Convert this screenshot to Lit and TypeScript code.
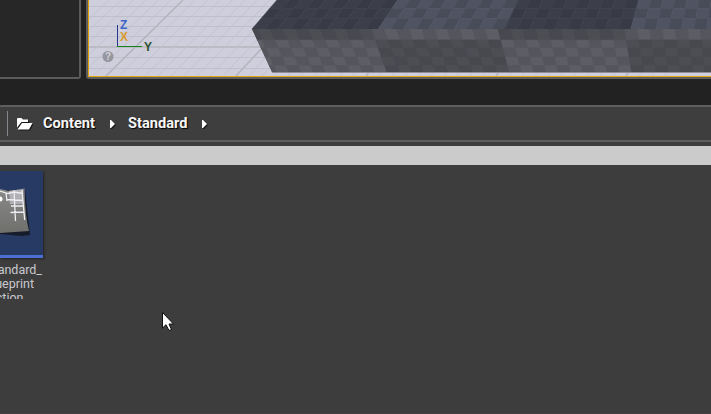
import { LitElement, html, css, svg } from "lit";
import { customElement } from "lit/decorators.js";

const poly = (p: number[][], fill: string) =>
  svg`<polygon points=${p.map((q) => q.map((n) => n.toFixed(2)).join(",")).join(" ")} fill=${fill} stroke=${fill} stroke-width="0.6"></polygon>`;

@customElement("level-viewport")
class LevelViewport extends LitElement {
  static styles = css`
    :host { display: block; flex: 1; box-sizing: border-box; border-left: 2px solid #5d5d5d; border-bottom: 2px solid #5d5d5d; border-bottom-left-radius: 3px; background: #5d5d5d; }
    .frame { height: 100%; box-sizing: border-box; border-left: 1px solid #e0a000; border-bottom: 1px solid #e8a50c; overflow: hidden; }
    svg { display: block; width: 622px; height: 76px; font-family: "Liberation Sans", sans-serif; }
    .axis { font-size: 12px; font-weight: 700; }
    .help { font-size: 10px; font-weight: 700; }
  `;

  floor() {
    const rows = [6.5, 16.5, 26.5, 36.5, 57.5, 68.5];
    const cols = Array.from({ length: 50 }, (_, i) => i - 6);
    return svg`
      ${rows.map((y) => svg`<path d="M89 ${y}H711" stroke="#c0c0cc"></path>`)}
      <path d="M89 47H711" stroke="#b7b6be" stroke-width="1.6"></path>
      ${cols.map((i) => {
        const major = i % 10 === 0;
        const x = 106 + i * 13;
        return svg`<path d="M${x} 76L${x + 77 - i * 0.65} 0" stroke=${major ? "#b4b4be" : "#c1c1cc"} stroke-width=${major ? 1.5 : 0.8}></path>`;
      })}`;
  }

  topFace() {
    const x = (i: number, y: number) => 252 + 12.63 * i + (25 - 0.57 * i) * (1 - y / 29);
    const ys = [-1, 8.5, 18.5, 29];
    const out = [];
    for (let i = 0; i < 38; i++)
      for (let r = 0; r < 3; r++) {
        const pale = Math.floor(i / 10) % 2 === 1;
        const alt = (i + r) % 2 === 0;
        out.push(poly([[x(i, ys[r]), ys[r]], [x(i + 1, ys[r]), ys[r]], [x(i + 1, ys[r + 1]), ys[r + 1]], [x(i, ys[r + 1]), ys[r + 1]]],
          pale ? (alt ? "#505462" : "#484c59") : (alt ? "#3c3f4a" : "#383a46")));
      }
    return out;
  }

  frontFace() {
    const x = (i: number, y: number) => 245 + 12.65 * i + (19.5 - 0.1 * i * 4.1) * ((y - 29) / 43);
    const ys = [29, 40, 48, 57, 65.5, 72];
    const out = [];
    for (let i = 0; i < 38; i++)
      for (let r = 0; r < 5; r++) {
        const even = Math.floor(i / 10) % 2 === 0;
        const pale = r === 0 ? !even : even;
        const alt = (i + r) % 2 === 0;
        out.push(poly([[x(i, ys[r]), ys[r]], [x(i + 1, ys[r]), ys[r]], [x(i + 1, ys[r + 1]), ys[r + 1]], [x(i, ys[r + 1]), ys[r + 1]]],
          pale ? (alt ? "#55555d" : "#5d5d65") : (alt ? "#48484f" : "#4d4d54")));
      }
    return out;
  }

  render() {
    return html`<div class="frame"><svg viewBox="89 0 622 76">
      <defs><clipPath id="front"><polygon points="252,29 711,29 711,72 272,72"></polygon></clipPath></defs>
      <rect x="89" width="622" height="76" fill="#cecedd"></rect>
      ${this.floor()}
      ${this.topFace()}
      <polygon points="252,29 711,29 711,72 272,72" fill="#54545a"></polygon>
      <g clip-path="url(#front)">${this.frontFace()}</g>
      <path d="M272 72.5H711" stroke="#8e8e99"></path>
      <path d="M117.5 25V46" stroke="#27338c"></path>
      <path d="M117 46.5H142" stroke="#17831f"></path>
      <text class="axis" x="120" y="29" fill="#3b62c8">Z</text>
      <text class="axis" x="120" y="41" fill="#d99a2b">X</text>
      <text class="axis" x="144" y="51" fill="#2b5330">Y</text>
      <circle cx="108" cy="56.5" r="5.5" fill="#96969f"></circle>
      <text class="help" x="105" y="60.2" fill="#d0d0dc">?</text>
    </svg></div>`;
  }
}

@customElement("path-bar")
class PathBar extends LitElement {
  static styles = css`
    :host { display: flex; align-items: center; box-sizing: border-box; height: 37px; border-top: 2px solid #5e5e5e; border-bottom: 2px solid #5e5e5e; background: #3e3e3e; padding-left: 7px; font: 700 14.6px/18px Roboto, sans-serif; color: #f6f6f6; text-shadow: 1px 1px 1px #000; }
    .rule { width: 1px; height: 25px; background: #85858b; }
    .folder { width: 17px; height: 14px; margin: 0 10px 0 8px; filter: drop-shadow(1px 1px 0 #151515); }
    .arrow { width: 6px; height: 10px; filter: drop-shadow(1px 1px 0 #151515); }
    .first { width: 52px; margin: 0 15px 2px 0; }
    .second { width: 59px; margin: 0 15px 2px 12px; }
    .arrow, .folder { flex: none; }
  `;
  arrow() {
    return html`<svg class="arrow" viewBox="0 0 6 10"><path d="M0 1H1L5 5L1 9H0Z" fill="#fff"></path></svg>`;
  }
  render() {
    return html`<span class="rule"></span>
      <svg class="folder" viewBox="0 0 17 14"><path d="M1 10.5V2Q1 1 2 1H5.5L7 2.6H12V5H5.5ZM1.5 12.5L6 6H16.5L13 12.5Z" fill="#fff"></path></svg>
      <span class="first">Content</span>${this.arrow()}<span class="second">Standard</span>${this.arrow()}`;
  }
}

@customElement("asset-tile")
class AssetTile extends LitElement {
  static styles = css`
    :host { display: block; width: 44px; }
    .thumb { display: block; width: 43px; height: 87px; box-shadow: 1px 1px 2px #222; }
    .name { height: 36px; margin-top: 5px; overflow: hidden; color: #c9c9cf; font: 12.5px/14px Roboto, sans-serif; }
    .line { display: flex; justify-content: flex-end; white-space: nowrap; }
    .a { width: 42px; } .b { width: 34px; } .c { width: 23.5px; }
  `;
  render() {
    return html`<svg class="thumb" viewBox="0 171 43 87">
        <defs><linearGradient id="paper" x1="0" y1="0" x2="0" y2="1"><stop offset="0" stop-color="#8a8a8a"></stop><stop offset="1" stop-color="#6f6f6c"></stop></linearGradient></defs>
        <rect y="171" width="43" height="87" fill="#263a63"></rect>
        <path d="M0 190L25 190L30 235L22 236L0 234Z" fill="#161c29"></path>
        <path d="M0 189L9 191L24.5 188.5Q25 216 29 231L0 233Z" fill="url(#paper)"></path>
        <path d="M9 190.5L23 189.5V204H10Z" fill="#d4d4de" opacity=".55"></path>
        <path d="M0 191L8 193.5L14 192L23 193.5M14 190.5L15.5 221M22 190L24.7 220M6 193L7 201M7 199.5L23 200.5M11 206L24 206M10.5 212.5L24 212" fill="none" stroke="#eeeef3" stroke-width="1.3"></path>
        <circle cx="0" cy="199" r="2.5" fill="#fff"></circle>
        <rect y="255" width="43" height="3" fill="#4b70d2"></rect>
      </svg>
      <div class="name"><div class="line a">Standard_</div><div class="line b">Blueprint</div><div class="line c">Function</div></div>`;
  }
}

@customElement("app-root")
class AppRoot extends LitElement {
  static styles = css`
    :host { display: block; position: relative; width: 711px; height: 414px; overflow: hidden; background: #222; }
    .upper { display: flex; gap: 5px; height: 79px; margin-bottom: 26px; }
    .side { width: 81px; box-sizing: border-box; border: solid #5b5b5b; border-width: 0 2px 2px 0; border-bottom-right-radius: 3px; background: #272727; }
    .browser { height: 309px; background: #3d3d3d; box-sizing: border-box; border-bottom: 1px solid #463f44; }
    .search { height: 19px; margin: 4px 0 6px; background: #cbcbcb; }
    .cursor { position: absolute; left: 162px; top: 312px; width: 12px; height: 20px; }
  `;
  render() {
    return html`
      <div class="upper"><div class="side"></div><level-viewport></level-viewport></div>
      <div class="browser"><path-bar></path-bar><div class="search"></div><asset-tile></asset-tile></div>
      <svg class="cursor" viewBox="0 0 12 20"><path d="M.5 .5V16L4 12.7L7 18.5L9.5 17.5L7 12H11.5Z" fill="#fff" stroke="#111"></path></svg>`;
  }
}
